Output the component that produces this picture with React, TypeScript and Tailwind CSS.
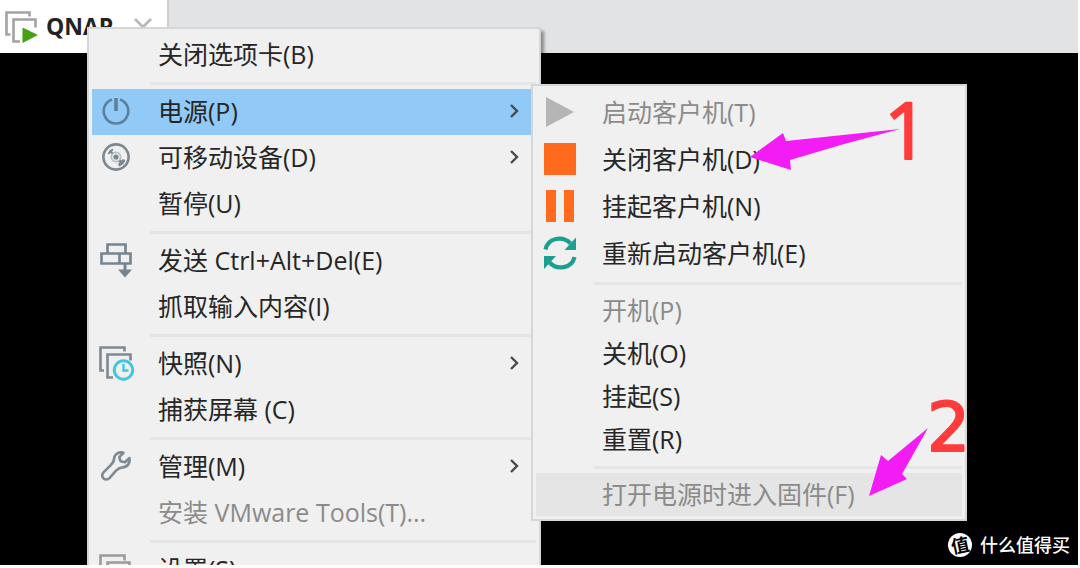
import type { ReactNode } from 'react';
import { clsx } from 'clsx';

type MenuEntry =
  | { kind: 'separator' }
  | {
      kind: 'item';
      label: string;
      icon?: ReactNode;
      submenu?: boolean;
      active?: boolean;
      disabled?: boolean;
      height: string;
    };

const separator: MenuEntry = { kind: 'separator' };

function PowerIcon() {
  return (
    <svg viewBox="0 0 32 32" className="size-8" fill="none" stroke="#5c7f9c" strokeWidth="2.6">
      <path d="M12 4.5a12.3 12.3 0 1 0 8 0" />
      <path d="M16 3v13" strokeWidth="3.6" />
    </svg>
  );
}

function DiscIcon() {
  return (
    <svg viewBox="0 0 32 32" className="size-8" fill="none" stroke="#7b8891" strokeWidth="2.6">
      <circle cx="16" cy="16" r="12.6" />
      <circle cx="16" cy="16" r="4.6" stroke="#b4bcc2" strokeWidth="1.6" />
      <circle cx="16" cy="16" r="2.6" fill="#7b8891" stroke="none" />
      <path d="M8.5 13a8 8 0 0 1 4.500-4.500M10 10l2.500 2.500" strokeWidth="2" />
      <path d="M18.5 24a8 8 0 0 0 5.5-5.5M19.500 19.500l3 3" strokeWidth="3" />
    </svg>
  );
}

function SendKeysIcon() {
  return (
    <svg viewBox="0 0 34 36" className="h-9 w-[34px]" fill="none" stroke="#76848e" strokeWidth="2.6">
      <path d="M8.500 11.500V2.500h18v9" />
      <path d="M2.500 11.500h29v10h-29zM20.500 11.500v10" />
      <path d="M26 21v9" strokeWidth="3" />
      <path d="M19 27.500h14l-7 8z" fill="#76848e" stroke="none" />
    </svg>
  );
}

function SnapshotIcon() {
  return (
    <svg viewBox="0 0 36 36" className="size-9" fill="none">
      <path d="M6 25.500H2.500V2.500h24v4" stroke="#7d8a92" strokeWidth="2.6" />
      <path d="M15 32.500H9.500v-23h23v6" stroke="#7d8a92" strokeWidth="2.6" />
      <circle cx="25.500" cy="25" r="9.200" fill="#f0f0f0" stroke="#45c6de" strokeWidth="3" />
      <path d="M25.500 19v6.500h5" stroke="#45c6de" strokeWidth="2.4" />
    </svg>
  );
}

function WrenchIcon() {
  return (
    <svg viewBox="0 0 32 32" className="size-8" fill="none" stroke="#7d8a94" strokeWidth="2.6" strokeLinejoin="round">
      <path d="M23.500 2.800c-4-1.300-9 1-9.500 6 0 3-1 4.200-3 6l-7.500 7.500c-2 2.200-1.500 4.700 0 6 1.600 1.600 4.300 1.600 6-.2l6.500-7.500c2-2 3.500-3.200 6.500-3.200 5-.3 8-4.600 7-9.400l-4.500 4.200-4.500-1-1.200-4z" />
    </svg>
  );
}

function SettingsIcon() {
  return (
    <svg viewBox="0 0 36 36" className="size-9" fill="none" stroke="#9a9a9a" strokeWidth="2.6">
      <path d="M6 25.500H2.500V4.500h24v5" />
      <path d="M9.500 11.500h22v22h-22z" />
    </svg>
  );
}

function PlayIcon() {
  return (
    <svg viewBox="0 0 32 32" className="size-8">
      <path d="M2 1l28 15L2 31z" fill="#b5b5b5" />
    </svg>
  );
}

function StopIcon() {
  return (
    <svg viewBox="0 0 32 32" className="size-8">
      <path d="M0 0h32v32H0z" fill="#ff6a1c" />
    </svg>
  );
}

function PauseIcon() {
  return (
    <svg viewBox="0 0 32 32" className="size-8">
      <path d="M2 0h10v32H2zM20 0h10v32H20z" fill="#ff6a1c" />
    </svg>
  );
}

function RestartIcon() {
  return (
    <svg viewBox="0 0 34 36" className="h-9 w-[34px]" fill="none" stroke="#1c9f90" strokeWidth="4.200">
      <path d="M2.500 14.500C5 2.500 20 .5 27.500 8.500" />
      <path d="M31.500 22C29 33.500 14 35.500 6.500 27.500" />
      <path d="M33 2.500v12.500H21.500z" fill="#1c9f90" stroke="none" />
      <path d="M1 34V21h12z" fill="#1c9f90" stroke="none" />
    </svg>
  );
}

function Chevron() {
  return (
    <svg viewBox="0 0 10 16" className="mr-4 h-4 w-2.5" fill="none" stroke="#4a4a4a" strokeWidth="2.4">
      <path d="M1 2l6 6-6 6" />
    </svg>
  );
}

const contextMenu: MenuEntry[] = [
  { kind: 'item', label: '关闭选项卡(B)', height: 'h-[45px]' },
  separator,
  { kind: 'item', label: '电源(P)', icon: <PowerIcon />, submenu: true, active: true, height: 'h-[46px]' },
  { kind: 'item', label: '可移动设备(D)', icon: <DiscIcon />, submenu: true, height: 'h-[46px]' },
  { kind: 'item', label: '暂停(U)', height: 'h-[45px]' },
  separator,
  { kind: 'item', label: '发送 Ctrl+Alt+Del(E)', icon: <SendKeysIcon />, height: 'h-[46px]' },
  { kind: 'item', label: '抓取输入内容(I)', height: 'h-[45px]' },
  separator,
  { kind: 'item', label: '快照(N)', icon: <SnapshotIcon />, submenu: true, height: 'h-[46px]' },
  { kind: 'item', label: '捕获屏幕 (C)', height: 'h-[45px]' },
  separator,
  { kind: 'item', label: '管理(M)', icon: <WrenchIcon />, submenu: true, height: 'h-[46px]' },
  { kind: 'item', label: '安装 VMware Tools(T)...', disabled: true, height: 'h-[45px]' },
  separator,
  { kind: 'item', label: '设置(S)', icon: <SettingsIcon />, height: 'h-[46px]' },
];

const powerMenu: MenuEntry[] = [
  { kind: 'item', label: '启动客户机(T)', icon: <PlayIcon />, disabled: true, height: 'h-[47px]' },
  { kind: 'item', label: '关闭客户机(D)', icon: <StopIcon />, height: 'h-[47px]' },
  { kind: 'item', label: '挂起客户机(N)', icon: <PauseIcon />, height: 'h-[47px]' },
  { kind: 'item', label: '重新启动客户机(E)', icon: <RestartIcon />, height: 'h-[47px]' },
  separator,
  { kind: 'item', label: '开机(P)', disabled: true, height: 'h-[43px]' },
  { kind: 'item', label: '关机(O)', height: 'h-[43px]' },
  { kind: 'item', label: '挂起(S)', height: 'h-[43px]' },
  { kind: 'item', label: '重置(R)', height: 'h-[43px]' },
  separator,
  { kind: 'item', label: '打开电源时进入固件(F)', disabled: true, active: true, height: 'h-[43px]' },
];

function MenuList({ entries }: { entries: MenuEntry[] }) {
  return (
    <>
      {entries.map((entry, index) => {
        if (entry.kind === 'separator') {
          return (
            <div key={index} role="separator" className="flex h-3 items-center pl-[58px]">
              <div className="h-[3px] flex-1 bg-[#e5e5e5]" />
            </div>
          );
        }

        return (
          <button
            key={index}
            type="button"
            role="menuitem"
            disabled={entry.disabled}
            className={clsx(
              'flex w-full items-center pb-0.5 whitespace-nowrap text-left text-[25px] leading-8',
              entry.height,
              entry.disabled ? 'text-[#8b8b8b]' : 'text-[#262626]',
              entry.active && (entry.disabled ? 'bg-[#e5e5e5]' : 'bg-[#91c9f7]'),
            )}
          >
            <span className="flex w-12 shrink-0 items-center justify-center">{entry.icon}</span>
            <span className="flex-1 pl-[18px]">{entry.label}</span>
            {entry.submenu && <Chevron />}
          </button>
        );
      })}
    </>
  );
}

function TabBar() {
  return (
    <header className="flex h-[53px] bg-[#e2e3e5]">
      <div className="flex w-[169px] items-center border-r-2 border-[#cdcdcd] bg-white pl-1">
        <svg viewBox="0 0 34 34" className="size-[34px]" fill="none" stroke="#a3a3a3" strokeWidth="2.6">
          <path d="M6.500 24.500H2.500V2.500h23v4" />
          <path d="M16 31.500H9.500v-22h22v8" />
          <path d="M18.500 17.500L34 25l-15.500 8z" fill="#45a012" stroke="none" />
        </svg>
        <span className="ml-2 w-[88px] text-[23px] font-bold text-[#222]">QNAP</span>
        <button type="button" aria-label="Close tab">
          <svg viewBox="0 0 18 18" className="size-[18px]" stroke="#b9b9b9" strokeWidth="2.8">
            <path d="M1 1l16 16M17 1L1 17" />
          </svg>
        </button>
      </div>
    </header>
  );
}

function Annotations() {
  return (
    <svg
      viewBox="0 0 250 380"
      className="pointer-events-none absolute top-[90px] left-[745px] h-[380px] w-[250px] overflow-visible"
    >
      <path d="M5 67L38 43L41 51L155 39Q100 53 45 70L46 80z" fill="#f31cf5" />
      <path d="M124 406L136 365L143 371L183 338L157 384L162 389z" fill="#f31cf5" />
      <g fill="#ff3b3b" stroke="#ff3b3b" strokeLinejoin="round" strokeWidth="2">
        <text x="139" y="69" fontSize="78">
          1
        </text>
        <text x="182" y="361" fontSize="68" className="font-['DejaVu_Sans',sans-serif]">
          2
        </text>
      </g>
    </svg>
  );
}

export default function App() {
  return (
    <div className="h-screen overflow-hidden bg-white pr-0.5 pb-[3px] font-['Open_Sans','Noto_Sans_CJK_SC',sans-serif]">
      <main className="relative flex h-full flex-col overflow-hidden bg-black">
        <TabBar />

        <div
          role="menu"
          className="absolute top-[27px] left-[87px] w-[454px] border-2 border-[#d6d6d6] bg-[#f0f0f0] px-[3px] py-[3px] shadow-[3px_4px_3px_rgba(0,0,0,0.4)]"
        >
          <MenuList entries={contextMenu} />
        </div>

        <div
          role="menu"
          className="absolute top-[84px] left-[531px] w-[436px] border-2 border-[#d6d6d6] bg-[#f0f0f0] px-[3px] py-[3px]"
        >
          <MenuList entries={powerMenu} />
        </div>

        <Annotations />

        <div className="absolute right-2 bottom-2 flex items-center gap-2 text-white">
          <span className="flex size-6 items-center justify-center rounded-full bg-white">
            <span className="-rotate-12 text-lg leading-6 font-bold text-black">值</span>
          </span>
          <span className="text-[18px] leading-6 font-medium">什么值得买</span>
        </div>
      </main>
    </div>
  );
}
